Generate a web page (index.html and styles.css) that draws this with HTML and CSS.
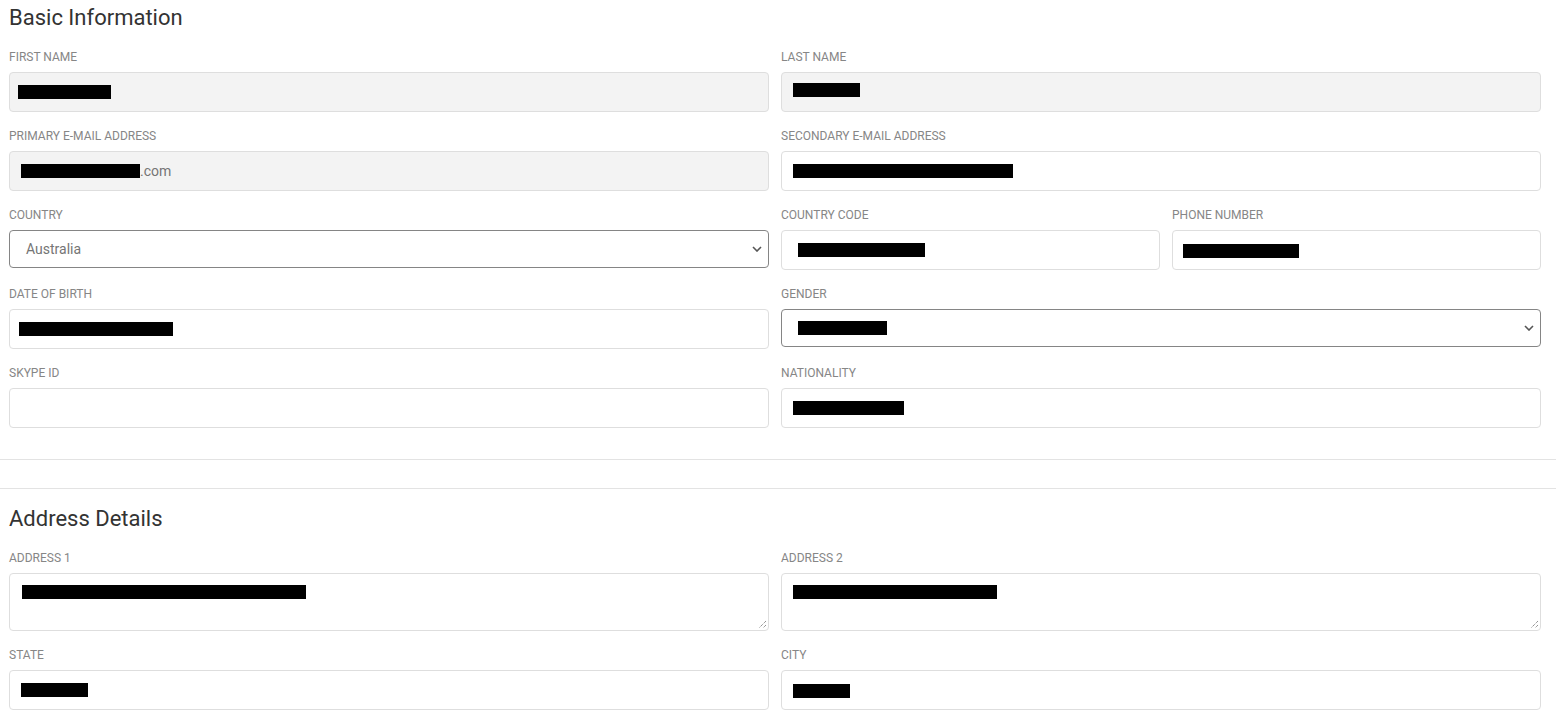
FILE: index.html
```html
<!DOCTYPE html>
<html>
<head>
	<meta charset="utf-8">
	<title>Profile</title>
	<link rel="stylesheet" href="styles.css">
</head>
<body>

	<section class="panel first">
		<h2 class="title">Basic Information</h2>
		<div class="grid">
			<div class="field">
				<label>First Name</label>
				<div class="box readonly"><span class="redact" style="margin-left:8px;width:93px"></span></div>
			</div>
			<div class="field">
				<label>Last Name</label>
				<div class="box readonly"><span class="redact up" style="width:67px"></span></div>
			</div>

			<div class="field">
				<label>Primary E-mail Address</label>
				<div class="box readonly"><span class="redact" style="width:119px"></span><span class="val">.com</span></div>
			</div>
			<div class="field">
				<label>Secondary E-mail Address</label>
				<div class="box"><span class="redact" style="width:220px"></span></div>
			</div>

			<div class="field">
				<label>Country</label>
				<div class="box select"><span class="val pad">Australia</span><svg class="chev" width="10" height="6" viewBox="0 0 10 6"><path d="M1 1l4 4 4-4" fill="none" stroke="#555" stroke-width="1.6"/></svg></div>
			</div>
			<div class="split">
				<div class="field">
					<label>Country Code</label>
					<div class="box"><span class="redact" style="margin-left:16px;width:127px"></span></div>
				</div>
				<div class="field">
					<label>Phone Number</label>
					<div class="box"><span class="redact down" style="margin-left:10px;width:116px"></span></div>
				</div>
			</div>

			<div class="field">
				<label>Date of Birth</label>
				<div class="box"><span class="redact" style="margin-left:9px;width:154px"></span></div>
			</div>
			<div class="field">
				<label>Gender</label>
				<div class="box select"><span class="redact" style="margin-left:16px;width:89px"></span><svg class="chev" width="10" height="6" viewBox="0 0 10 6"><path d="M1 1l4 4 4-4" fill="none" stroke="#555" stroke-width="1.6"/></svg></div>
			</div>

			<div class="field">
				<label>Skype ID</label>
				<div class="box"></div>
			</div>
			<div class="field">
				<label>Nationality</label>
				<div class="box"><span class="redact" style="width:111px"></span></div>
			</div>
		</div>
	</section>

	<section class="panel second">
		<h2 class="title">Address Details</h2>
		<div class="grid">
			<div class="field">
				<label>Address 1</label>
				<div class="box area"><span class="redact" style="margin-left:12px;width:284px"></span><svg class="grip" width="9" height="9" viewBox="0 0 9 9"><path d="M8 1L1 8M8 5L5 8" stroke="#666" stroke-width="1" stroke-dasharray="1 1"/></svg></div>
			</div>
			<div class="field">
				<label>Address 2</label>
				<div class="box area"><span class="redact" style="width:204px"></span><svg class="grip" width="9" height="9" viewBox="0 0 9 9"><path d="M8 1L1 8M8 5L5 8" stroke="#666" stroke-width="1" stroke-dasharray="1 1"/></svg></div>
			</div>

			<div class="field">
				<label>State</label>
				<div class="box"><span class="redact" style="width:67px"></span></div>
			</div>
			<div class="field">
				<label>City</label>
				<div class="box"><span class="redact down" style="width:57px"></span></div>
			</div>
		</div>
	</section>

</body>
</html>
```

FILE: styles.css
```css
body, html {
	margin: 0;
	padding: 0;
	background: #fff;
}

body {
	font-family: Roboto, "Liberation Sans", sans-serif;
	color: #333;
}

.panel {
	padding: 0 15px 14px 9px;
	border-bottom: 1px solid #e3e3e3;
}

.panel.second {
	margin-top: 28px;
	padding-top: 12px;
	border-top: 1px solid #e3e3e3;
	border-bottom: 0;
}

.title {
	margin: 5px 0 19px;
	font-size: 22px;
	line-height: 26px;
	font-weight: 400;
	color: #333;
}

.grid {
	display: grid;
	grid-template-columns: 760px 1fr;
	column-gap: 12px;
	align-items: start;
}

.split {
	display: grid;
	grid-template-columns: 379px 1fr;
	column-gap: 12px;
	align-items: start;
}

.field {
	margin-bottom: 17px;
}

.field label {
	display: block;
	font-size: 12px;
	line-height: 14px;
	color: #868686;
	text-transform: uppercase;
	margin-bottom: 8px;
}

.box {
	position: relative;
	box-sizing: border-box;
	height: 40px;
	border: 1px solid #dedede;
	border-radius: 4px;
	background: #fff;
	display: flex;
	align-items: center;
	padding: 0;
}

.box.readonly {
	background: #f3f3f3;
}

.box.select {
	height: 38px;
	border-color: #858585;
}

.box.area {
	height: 58px;
	align-items: flex-start;
	padding-top: 11px;
}

.redact {
	display: inline-block;
	height: 14px;
	margin-left: 11px;
	background: #000;
}

.redact.up { margin-top: -5px; }
.redact.down { margin-top: 2px; }

.val {
	font-size: 14px;
	color: #757575;
}

.val.pad {
	margin-left: 16px;
}

.chev {
	position: absolute;
	right: 6px;
	top: 15px;
}

.grip {
	position: absolute;
	right: 1px;
	bottom: 1px;
}
```
